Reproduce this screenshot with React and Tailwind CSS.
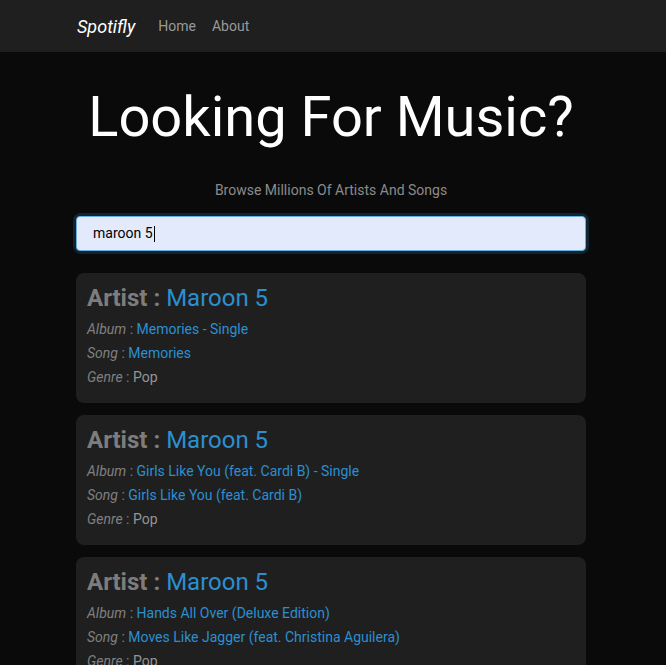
export default function App() {
  const items = [
    { album: "Memories - Single", song: "Memories", genre: "Pop" },
    { album: "Girls Like You (feat. Cardi B) - Single", song: "Girls Like You (feat. Cardi B)", genre: "Pop" },
    { album: "Hands All Over (Deluxe Edition)", song: "Moves Like Jagger (feat. Christina Aguilera)", genre: "Pop" },
  ];
  return (
    <div className="h-[665px] overflow-hidden bg-[#0a0a0a] font-['Roboto',sans-serif]">
      <nav className="h-[52px] bg-[#1f1f1f]">
        <div className="ml-[77px] flex h-full items-center">
          <span className="text-[18px] italic text-white">Spotifly</span>
          <span className="ml-[23px] text-[14px] text-[#999]">Home</span>
          <span className="ml-[16px] text-[14px] text-[#999]">About</span>
        </div>
      </nav>
      <div className="ml-[76px] w-[510px]">
        <h1 className="mt-[32px] whitespace-nowrap text-center text-[56px] leading-[67px] text-white">Looking For Music?</h1>
        <p className="mt-[29px] text-center text-[14px] leading-[20px] text-[#8a8a8a]">Browse Millions Of Artists And Songs</p>
        <div className="mt-[16px] rounded-[5px] shadow-[0_0_0_3px_#0f2533]">
          <div className="flex h-[35px] items-center rounded-[4px] border border-[#6aaee0] bg-[#e2eafc] px-[16px] text-[14px] text-black">
            maroon 5<span className="ml-px inline-block h-[16px] w-px bg-black"></span>
          </div>
        </div>
        <div className="mt-[22px] flex flex-col gap-[12px]">
          {items.map((it, i) => (
            <div key={i} className="h-[130px] shrink-0 rounded-[8px] bg-[#1f1f1f] px-[11px] pt-[10px]">
              <div className="text-[24px] leading-[30px]">
                <span className="font-bold text-[#7d7d7d]">Artist : </span>
                <span className="text-[#2b8fd0]">Maroon 5</span>
              </div>
              <div className="mt-[4px] text-[14px] leading-[24px]">
                <div><span className="italic text-[#808080]">Album</span><span className="text-[#808080]"> : </span><span className="text-[#2b8fd0]">{it.album}</span></div>
                <div><span className="italic text-[#808080]">Song</span><span className="text-[#808080]"> : </span><span className="text-[#2b8fd0]">{it.song}</span></div>
                <div><span className="italic text-[#808080]">Genre</span><span className="text-[#808080]"> : </span><span className="text-[#959595]">{it.genre}</span></div>
              </div>
            </div>
          ))}
        </div>
      </div>
    </div>
  );
}
